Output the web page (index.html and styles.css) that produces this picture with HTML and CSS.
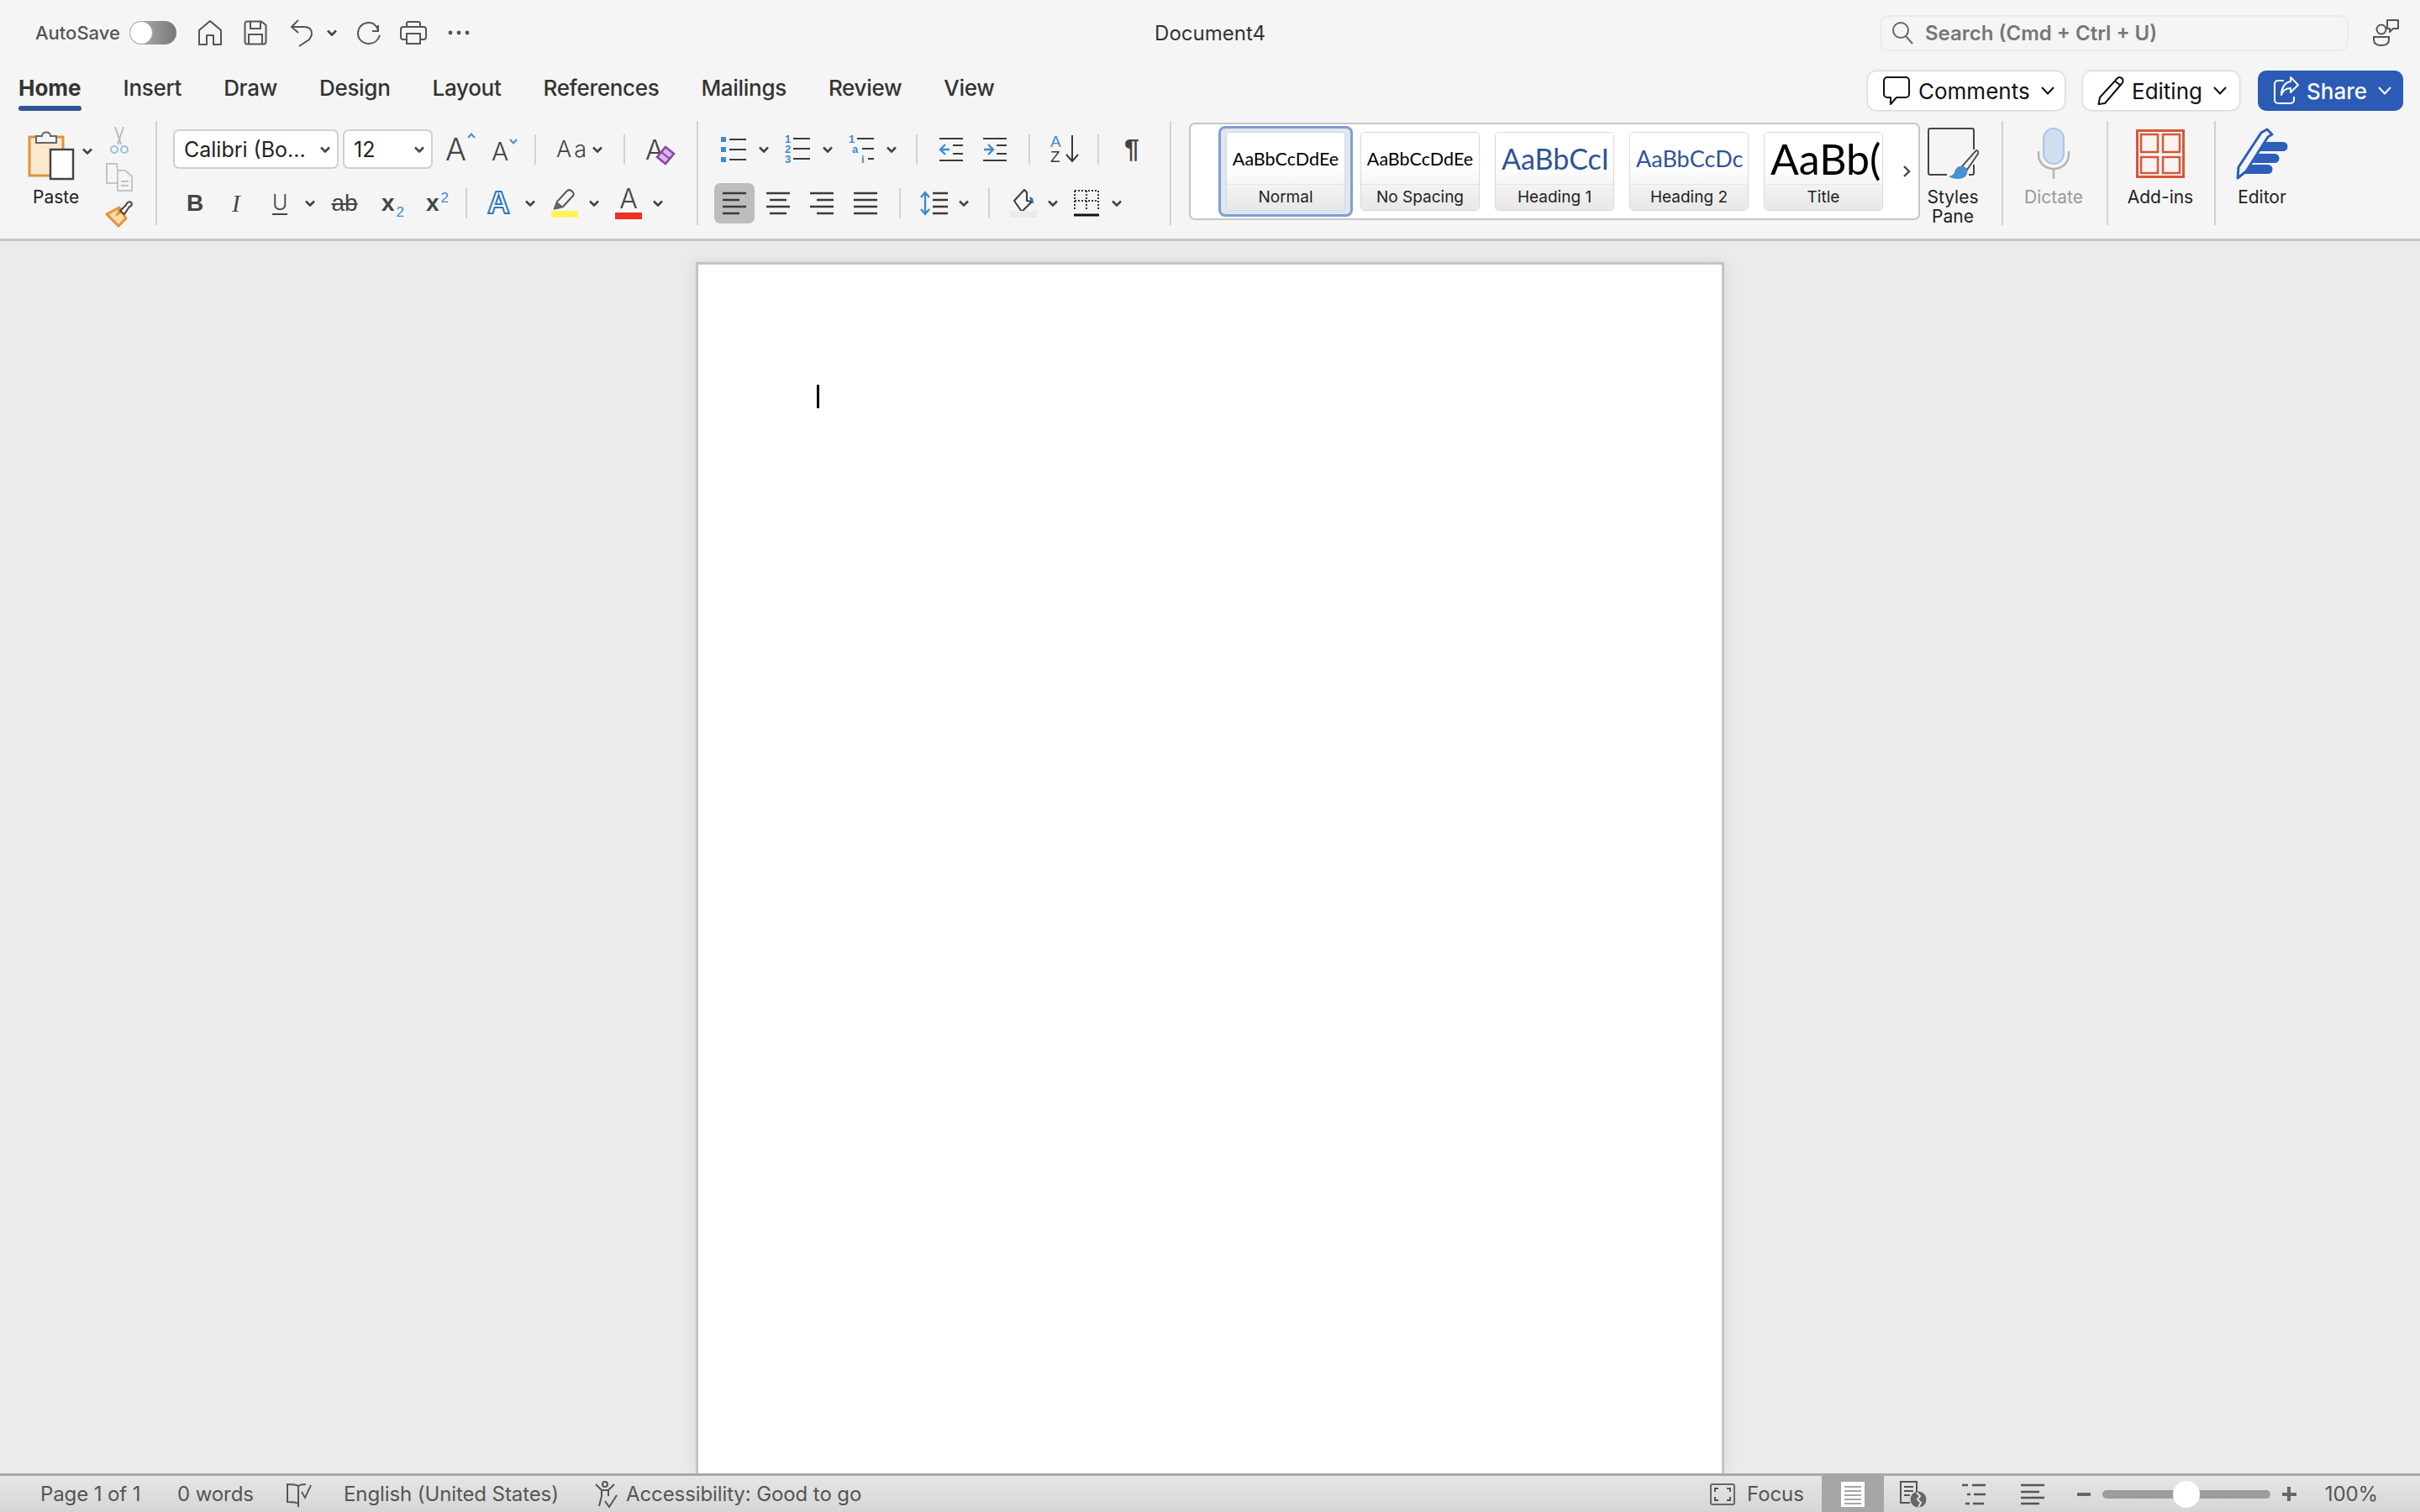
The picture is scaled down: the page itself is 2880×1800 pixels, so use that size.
FILE: index.html
```html
<!DOCTYPE html>
<html>
    <head>
        <meta charset="utf-8">
        <title>Document4</title>
        <link rel="stylesheet" href="styles.css">
    </head>
    <body>
        <svg class="defs" width="0" height="0">
            <symbol id="caret" viewBox="0 0 12 8"><path d="M1 1.500L6 6.500L11 1.500" fill="none" stroke="#444" stroke-width="2.600"/></symbol>
            <symbol id="caret_thin" viewBox="0 0 16 10"><path d="M1 1L8 8.500L15 1" fill="none" stroke="currentColor" stroke-width="2"/></symbol>
        </svg>

        <!-- title bar -->
        <div class="titlebar">
            <div class="qat">
                <span class="autosave">AutoSave</span>
                <span class="toggle"><span class="knob"></span></span>
                <svg width="30" height="32" viewBox="0 0 30 32"><path d="M2 30V13L15 2L28 13V30H19V19H11V30Z" fill="none" stroke="#555" stroke-width="2" stroke-linejoin="round"/></svg>
                <svg width="28" height="30" viewBox="0 0 28 30"><path d="M4 1.500H21L26.500 6V26a2.500 2.500 0 0 1-2.500 2.500H4A2.500 2.500 0 0 1 1.500 26V4A2.500 2.500 0 0 1 4 1.500ZM8 1.500V10H20V1.500M6 28.500V17H22V28.500" fill="none" stroke="#555" stroke-width="2"/></svg>
                <svg width="28" height="34" viewBox="0 0 28 34"><path d="M10 2L2 10L10 17M2 10H17C23 10 26 13 26 18C26 21 25 22 23 25L11 33" fill="none" stroke="#555" stroke-width="2"/></svg>
                <svg class="qat_caret" width="12" height="8"><use href="#caret"/></svg>
                <svg width="30" height="30" viewBox="0 0 30 30"><path d="M26 6V13H19M26 12C24 6 20 3 15 3C8 3 2 8 2 16C2 23 8 28 15 28C21 28 26 24 28 18" fill="none" stroke="#555" stroke-width="2"/></svg>
                <svg width="32" height="30" viewBox="0 0 32 30"><path d="M8 8V4a2 2 0 0 1 2-2H22a2 2 0 0 1 2 2V8M8 23H4a3 3 0 0 1-3-3V11a3 3 0 0 1 3-3H28a3 3 0 0 1 3 3V20a3 3 0 0 1-3 3H24M8 16H24V28H8Z" fill="none" stroke="#555" stroke-width="2"/></svg>
                <svg width="26" height="6" viewBox="0 0 26 6"><circle cx="3" cy="3" r="2.400" fill="#555"/><circle cx="13" cy="3" r="2.400" fill="#555"/><circle cx="23" cy="3" r="2.400" fill="#555"/></svg>
            </div>
            <div class="doc_title">Document4</div>
            <div class="title_right">
                <div class="search">
                    <svg width="26" height="28" viewBox="0 0 26 28"><circle cx="11" cy="11" r="9" fill="none" stroke="#666" stroke-width="2"/><path d="M17 18L25 27" stroke="#666" stroke-width="2"/></svg>
                    <span>Search (Cmd + Ctrl + U)</span>
                </div>
                <svg width="32" height="34" viewBox="0 0 32 34"><circle cx="10" cy="13" r="5.500" fill="none" stroke="#555" stroke-width="2"/><path d="M1 22H19V25C19 30 15 32 10 32C5 32 1 30 1 25Z" fill="none" stroke="#555" stroke-width="2"/><path d="M17 2H30V12H24L20 16V12H17Z" fill="none" stroke="#555" stroke-width="2" stroke-linejoin="round"/></svg>
            </div>
        </div>

        <!-- tabs and the share buttons -->
        <div class="tabrow">
            <div class="tabs">
                <div class="tab active">Home</div>
                <div class="tab">Insert</div>
                <div class="tab">Draw</div>
                <div class="tab">Design</div>
                <div class="tab">Layout</div>
                <div class="tab">References</div>
                <div class="tab">Mailings</div>
                <div class="tab">Review</div>
                <div class="tab">View</div>
            </div>
            <div class="actions">
                <div class="action comments">
                    <svg width="34" height="36" viewBox="0 0 34 36"><path d="M6 2H28a4 4 0 0 1 4 4V22a4 4 0 0 1-4 4H17L10 34V26H6a4 4 0 0 1-4-4V6a4 4 0 0 1 4-4Z" fill="none" stroke="#111" stroke-width="2" stroke-linejoin="round"/></svg>
                    <span>Comments</span>
                    <svg class="a_caret" width="16" height="10"><use href="#caret_thin"/></svg>
                </div>
                <div class="action editing">
                    <svg width="32" height="34" viewBox="0 0 32 34"><path d="M24 2C26 0.500 29 1 30 3C31 5 31 6 29.500 8L9 32L1.500 33L3 25ZM21 5.500L28 11" fill="none" stroke="#111" stroke-width="2" stroke-linejoin="round"/></svg>
                    <span>Editing</span>
                    <svg class="a_caret" width="16" height="10"><use href="#caret_thin"/></svg>
                </div>
                <div class="action share">
                    <svg width="30" height="34" viewBox="0 0 30 34"><path d="M12 5H5a4 4 0 0 0-4 4V28a4 4 0 0 0 4 4H20a4 4 0 0 0 4-4V24M20 1L29 10L20 19V14C15 14 11 16 9 22C9 14 13 7 20 6Z" fill="none" stroke="#fff" stroke-width="2" stroke-linejoin="round"/></svg>
                    <span>Share</span>
                    <svg class="a_caret" width="16" height="10"><use href="#caret_thin"/></svg>
                </div>
            </div>
        </div>

        <!-- ribbon -->
        <div class="ribbon">
            <div class="group clipboard">
                <div class="paste">
                    <svg width="56" height="64" viewBox="0 0 56 64">
                        <rect x="2" y="11" width="40" height="46" fill="#fbe9cf" stroke="#e3913c" stroke-width="3"/>
                        <path d="M10 18V10H17C17 4 27 4 27 10H34V18Z" fill="#f5f5f5" stroke="#666" stroke-width="2"/>
                        <rect x="27" y="26" width="27" height="35" fill="#fff" stroke="#444" stroke-width="2.500"/>
                    </svg>
                    <svg class="paste_caret" width="12" height="8"><use href="#caret"/></svg>
                    <div class="paste_label">Paste</div>
                </div>
                <div class="small_icons">
                    <svg width="32" height="34" viewBox="0 0 32 34"><path d="M11 1L18 22M21 1L14 22" stroke="#bbb" stroke-width="2" fill="none"/><circle cx="10" cy="28" r="4" fill="none" stroke="#9dbfe0" stroke-width="2"/><circle cx="22" cy="28" r="4" fill="none" stroke="#9dbfe0" stroke-width="2"/></svg>
                    <svg width="32" height="34" viewBox="0 0 32 34"><path d="M14 24H1V1H13L14 8M14 9H23L31 16V33H14Z" fill="none" stroke="#c4c4c4" stroke-width="2"/><path d="M18 22H27M18 27H27" stroke="#c4c4c4" stroke-width="2"/></svg>
                    <svg width="32" height="32" viewBox="0 0 32 32"><path d="M1 17L16 9L24 22L15 31Z" fill="#fbd9a8" stroke="#e3913c" stroke-width="3" stroke-linejoin="round"/><path d="M11 20L16 9L22 14Z" fill="#e3913c"/><path d="M17 13L24 6C25 3 28 1 30 3C32 5 30 8 28 8L22 17Z" fill="#f5f5f5" stroke="#444" stroke-width="2" stroke-linejoin="round"/></svg>
                </div>
            </div>
            <div class="big_sep"></div>

            <div class="group font_group">
                <div class="row row_font1">
                    <div class="select font_select"><span>Calibri (Bo...</span><svg width="12" height="8"><use href="#caret"/></svg></div>
                    <div class="select size_select"><span>12</span><svg width="12" height="8"><use href="#caret"/></svg></div>
                    <div class="grow"><span>A</span><svg width="10" height="7" viewBox="0 0 10 7"><path d="M1 6L5 1.500L9 6" fill="none" stroke="#4a90d0" stroke-width="2"/></svg></div>
                    <div class="shrink"><span>A</span><svg width="10" height="7" viewBox="0 0 10 7"><path d="M1 1L5 5.500L9 1" fill="none" stroke="#4a90d0" stroke-width="2"/></svg></div>
                    <div class="sep"></div>
                    <div class="change_case">Aa</div>
                    <svg width="12" height="8"><use href="#caret"/></svg>
                    <div class="sep"></div>
                    <div class="clear_fmt">
                        <span>A</span>
                        <svg width="22" height="22" viewBox="0 0 22 22"><path d="M11 1L21 9L11 21L1 13Z" fill="#d9b8e6" stroke="#8e3ea8" stroke-width="2.500"/><path d="M6 7L16 15" stroke="#8e3ea8" stroke-width="2"/></svg>
                    </div>
                </div>
                <div class="row row_font2">
                    <div class="t_bold">B</div>
                    <div class="t_ital">I</div>
                    <div class="t_under">U</div>
                    <svg width="12" height="8"><use href="#caret"/></svg>
                    <div class="t_strike">ab</div>
                    <div class="t_x">x<sub>2</sub></div>
                    <div class="t_x">x<sup>2</sup></div>
                    <div class="sep"></div>
                    <div class="t_effect">A</div>
                    <svg width="12" height="8"><use href="#caret"/></svg>
                    <svg width="32" height="34" viewBox="0 0 32 34"><path d="M4 23L7 15L19 2C21 0.500 23 1 25 3C27 5 27 7 26 8L14 21L7 23Z" fill="#f5f5f5" stroke="#555" stroke-width="2"/><path d="M3 25L7 15L14 21Z" fill="#666"/><rect y="26" width="32" height="8" fill="#fff35c"/></svg>
                    <svg width="12" height="8"><use href="#caret"/></svg>
                    <div class="t_color"><span>A</span><i></i></div>
                    <svg width="12" height="8"><use href="#caret"/></svg>
                </div>
            </div>
            <div class="big_sep"></div>

            <div class="group para_group">
                <div class="row row_para1">
                    <svg width="30" height="30" viewBox="0 0 30 30"><path d="M0 0H6V6H0ZM0 12H6V18H0ZM0 24H6V30H0Z" fill="#3f8ad0"/><path d="M10 3H30M10 15H30M10 27H30" stroke="#3a3a3a" stroke-width="2.200"/></svg>
                    <svg width="12" height="8"><use href="#caret"/></svg>
                    <svg width="30" height="34" viewBox="0 0 30 34"><text class="svg_num" x="0" y="9">1</text><text class="svg_num" x="0" y="21">2</text><text class="svg_num" x="0" y="33">3</text><path d="M10 4H30M10 16H30M10 28H30" stroke="#3a3a3a" stroke-width="2.200"/></svg>
                    <svg width="12" height="8"><use href="#caret"/></svg>
                    <svg width="30" height="34" viewBox="0 0 30 34"><text class="svg_num" x="0" y="9">1</text><text class="svg_num" x="4" y="21">a</text><text class="svg_num" x="15" y="33">i</text><path d="M10 4H30M16 16H30M23 28H30" stroke="#3a3a3a" stroke-width="2.200"/></svg>
                    <svg width="12" height="8"><use href="#caret"/></svg>
                    <div class="sep"></div>
                    <svg width="28" height="30" viewBox="0 0 28 30"><path d="M0 2H28M16 10H28M16 20H28M0 28H28" stroke="#3a3a3a" stroke-width="2.200"/><path d="M12 15H1M7 9L1 15L7 21" stroke="#3f8ad0" stroke-width="2.400" fill="none"/></svg>
                    <svg width="28" height="30" viewBox="0 0 28 30"><path d="M0 2H28M16 10H28M16 20H28M0 28H28" stroke="#3a3a3a" stroke-width="2.200"/><path d="M1 15H12M6 9L12 15L6 21" stroke="#3f8ad0" stroke-width="2.400" fill="none"/></svg>
                    <div class="sep"></div>
                    <svg width="36" height="36" viewBox="0 0 36 36"><text class="svg_sort az_blue" x="0" y="15">A</text><text class="svg_sort" x="0" y="33">Z</text><path d="M26 1V31M19 24L26 32L33 24" fill="none" stroke="#3a3a3a" stroke-width="2"/></svg>
                    <div class="sep"></div>
                    <div class="pilcrow">¶</div>
                </div>
                <div class="row row_para2">
                    <div class="align_on"><svg width="28" height="28" viewBox="0 0 28 28"><path d="M0 2H28M0 10H20M0 18H28M0 26H20" stroke="#3a3a3a" stroke-width="2.400"/></svg></div>
                    <svg width="28" height="28" viewBox="0 0 28 28"><path d="M0 2H28M4 10H24M0 18H28M4 26H24" stroke="#3a3a3a" stroke-width="2.400"/></svg>
                    <svg width="28" height="28" viewBox="0 0 28 28"><path d="M0 2H28M8 10H28M0 18H28M8 26H28" stroke="#3a3a3a" stroke-width="2.400"/></svg>
                    <svg width="28" height="28" viewBox="0 0 28 28"><path d="M0 2H28M0 10H28M0 18H28M0 26H28" stroke="#3a3a3a" stroke-width="2.400"/></svg>
                    <div class="sep"></div>
                    <svg width="32" height="30" viewBox="0 0 32 30"><path d="M5 2V28M0 8L5 2L10 8M0 22L5 28L10 22" fill="none" stroke="#3f8ad0" stroke-width="2.400"/><path d="M14 3H32M14 11H32M14 19H32M14 27H32" stroke="#3a3a3a" stroke-width="2.400"/></svg>
                    <svg width="12" height="8"><use href="#caret"/></svg>
                    <div class="sep"></div>
                    <svg width="32" height="34" viewBox="0 0 32 34"><path d="M5 14L17 1L20 4V14L26 15L14 27Z" fill="#f5f5f5" stroke="#3a3a3a" stroke-width="2" stroke-linejoin="round"/><path d="M23 10C26 9 28 11 28 18C26 16 25 14 23 10Z" fill="#2f6cb0"/><rect y="26" width="32" height="8" fill="#ebebeb"/></svg>
                    <svg width="12" height="8"><use href="#caret"/></svg>
                    <svg width="30" height="34" viewBox="0 0 30 34"><path d="M1 2H29V26M1 2V26M15 2V26M1 14H29" fill="none" stroke="#333" stroke-width="2" stroke-dasharray="2 2"/><path d="M0 31H30" stroke="#111" stroke-width="3"/></svg>
                    <svg width="12" height="8"><use href="#caret"/></svg>
                </div>
            </div>
            <div class="big_sep"></div>

            <div class="gallery">
                <div class="style_item selected"><div class="style_card"><div class="preview p_normal">AaBbCcDdEe</div><div class="style_name">Normal</div></div></div>
                <div class="style_item"><div class="style_card"><div class="preview p_normal">AaBbCcDdEe</div><div class="style_name">No Spacing</div></div></div>
                <div class="style_item"><div class="style_card"><div class="preview p_h1">AaBbCcI</div><div class="style_name">Heading 1</div></div></div>
                <div class="style_item"><div class="style_card"><div class="preview p_h2">AaBbCcDc</div><div class="style_name">Heading 2</div></div></div>
                <div class="style_item"><div class="style_card"><div class="preview p_title">AaBb(</div><div class="style_name">Title</div></div></div>
                <svg class="gallery_next" width="10" height="16" viewBox="0 0 10 16"><path d="M2 2L8 8L2 14" fill="none" stroke="#444" stroke-width="2.400"/></svg>
            </div>

            <div class="big_btn styles_pane">
                <svg width="62" height="62" viewBox="0 0 62 62"><path d="M24 56H4a2 2 0 0 1-2-2V3a2 2 0 0 1 2-2H54a2 2 0 0 1 2 2V26M56 44V54a2 2 0 0 1-2 2H50" fill="none" stroke="#444" stroke-width="2"/><path d="M58 28C60 26 62 28 61 31L48 50L42 46Z" fill="#f5f5f5" stroke="#555" stroke-width="2"/><path d="M43 46C49 48 50 53 46 58C42 62 32 62 26 58C32 57 33 54 34 50C36 46 40 45 43 46Z" fill="#4a90d0"/></svg>
                <div class="btn_label">Styles<br>Pane</div>
            </div>
            <div class="big_sep"></div>
            <div class="big_btn dictate">
                <svg width="40" height="62" viewBox="0 0 40 62"><rect x="8" y="1" width="24" height="42" rx="12" fill="#cfe0f1" stroke="#a9c6e6" stroke-width="2"/><path d="M2 28V32C2 42 10 49 20 49C30 49 38 42 38 32V28M20 49V61" fill="none" stroke="#b5b5b5" stroke-width="2.500"/></svg>
                <div class="btn_label">Dictate</div>
            </div>
            <div class="big_sep"></div>
            <div class="big_btn addins">
                <svg width="58" height="58" viewBox="0 0 58 58"><path d="M1.500 1.500H56.500V56.500H1.500Z" fill="none" stroke="#d6573a" stroke-width="3"/><path d="M6 6H26V27H6ZM32 6H52V27H32ZM6 33H26V52H6ZM32 33H52V52H32Z" fill="#f8f3f0" stroke="#d6573a" stroke-width="2.500"/></svg>
                <div class="btn_label">Add-ins</div>
            </div>
            <div class="big_sep"></div>
            <div class="big_btn editor">
                <svg width="62" height="62" viewBox="0 0 62 62"><path d="M37 2L43 8L38 11L12 52L2 60L3 47L30 6Z" fill="#f5f5f5" stroke="#2b5fb8" stroke-width="3" stroke-linejoin="round"/><path d="M33 17H56a5 5 0 0 1 0 11H28ZM26 31H46a5 5 0 0 1 0 11H20ZM17 44H38a5 5 0 0 1 0 11H11Z" fill="#2b5fb8"/></svg>
                <div class="btn_label">Editor</div>
            </div>
        </div>

        <!-- document area -->
        <div class="workspace">
            <div class="page"><div class="cursor"></div></div>
        </div>

        <!-- status bar -->
        <div class="statusbar">
            <div class="status_left">
                <span class="s_page">Page 1 of 1</span>
                <span class="s_words">0 words</span>
                <svg class="s_book" width="32" height="30" viewBox="0 0 32 30"><path d="M15 5C12 3 6 3 2 3V24C6 24 12 24 15 26ZM15 5V30M15 5C18 3 22 3 24 3" fill="none" stroke="#555" stroke-width="2"/><path d="M19 12L23 19L30 4" fill="none" stroke="#555" stroke-width="1.800"/></svg>
                <span class="s_lang">English (United States)</span>
                <svg class="s_a11y" width="30" height="32" viewBox="0 0 30 32"><circle cx="13" cy="4" r="3" fill="none" stroke="#555" stroke-width="2"/><path d="M2 4L9 11H17L24 4M9 11V18L6 30M17 11V18" fill="none" stroke="#555" stroke-width="2"/><path d="M13 24L18 31L27 17" fill="none" stroke="#555" stroke-width="2"/></svg>
                <span>Accessibility: Good to go</span>
            </div>
            <div class="status_right">
                <svg width="30" height="26" viewBox="0 0 30 26"><rect x="1" y="1" width="28" height="24" rx="2" fill="none" stroke="#666" stroke-width="2"/><path d="M6 10V6H10M24 10V6H20M6 16V20H10M24 16V20H20" fill="none" stroke="#555" stroke-width="2"/></svg>
                <span class="s_focus">Focus</span>
                <div class="view_on"><svg width="28" height="30" viewBox="0 0 28 30"><rect width="28" height="30" fill="#fff"/><path d="M4 6H24M4 11H24M4 16H24M4 21H24M4 26H24" stroke="#a6a6a6" stroke-width="2"/></svg></div>
                <svg class="s_web" width="32" height="32" viewBox="0 0 32 32"><path d="M12 26H1V1H20V14" fill="none" stroke="#555" stroke-width="2"/><path d="M5 7H16M5 12H16M5 17H12" stroke="#555" stroke-width="2"/><circle cx="22" cy="22" r="9.500" fill="#666"/><path d="M20 14L24 18L21 22L25 26L22 31" stroke="#e4e4e4" stroke-width="2" fill="none"/></svg>
                <svg class="s_outline" width="30" height="26" viewBox="0 0 30 26"><path d="M1 2H8M13 2H29M7 13H11M15 13H29M5 24H10M14 24H27" stroke="#555" stroke-width="2.400"/></svg>
                <svg class="s_draft" width="28" height="26" viewBox="0 0 28 26"><path d="M0 2H28M0 10H22M0 17H28M0 24H22" stroke="#555" stroke-width="2.600"/></svg>
                <span class="zoom_minus"></span>
                <div class="slider"><span class="thumb"></span></div>
                <span class="zoom_plus"></span>
                <span class="s_zoom">100%</span>
            </div>
        </div>
    </body>
</html>
```

FILE: styles.css
```css
*{
    box-sizing: border-box;
}
html, body{
    margin: 0; height: 100%;
}
body{
    width: 2880px; height: 1800px; overflow: hidden; display: flex; flex-direction: column;
    background-color: #ebebeb; color: #333; font-family: Inter, "Noto Sans", sans-serif;
}
svg{
    display: block; flex: none; overflow: visible;
}
.defs{
    position: absolute;
}

/* title bar */
.titlebar{
    height: 78px; display: grid; grid-template-columns: 1fr auto 1fr; align-items: center;
    background-color: #f5f5f5; padding: 0 24px;
}
.qat{
    display: grid; grid-template-columns: 112px 81px 55px 55px 44px 35px 52px 57px 26px; align-items: center; height: 100%; padding-left: 18px;
}
.autosave{
    font-size: 22px; color: #555; font-weight: 500;
}
.toggle{
    display: block; width: 56px; height: 28px; border-radius: 14px; background: linear-gradient(90deg, #bbb, #777);
}
.knob{
    display: block; width: 28px; height: 28px; border-radius: 50%; background-color: #fff; border: 1px solid #aaa;
}
.doc_title{
    font-size: 24px; color: #333;
}
.title_right{
    display: flex; justify-content: flex-end; align-items: center; gap: 29px;
}
.search{
    width: 558px; height: 43px; display: flex; align-items: center; gap: 14px; padding-left: 12px;
    border: 2px solid #ebebeb; border-radius: 10px; font-size: 24px; font-weight: 600; color: #777;
}

/* tabs */
.tabrow{
    height: 56px; display: flex; justify-content: space-between; background-color: #f5f5f5; padding: 0 20px 0 22px;
}
.tabs{
    display: flex; gap: 50px;
}
.tab{
    display: flex; flex-direction: column; height: 54px; padding-top: 6px; font-size: 26px; line-height: 42px; font-weight: 500; color: #333; letter-spacing: -0.3px;
}
.tab::after{
    content: ""; height: 6px; border-radius: 3px;
}
.tab.active{
    font-weight: 700; letter-spacing: 0;
}
.tab.active::after{
    background-color: #2f5597;
}
.actions{
    display: flex; gap: 22px; padding-top: 7px;
}
.action{
    height: 46px; display: flex; align-items: center; gap: 9px; background-color: #fff; color: #111;
    border-radius: 10px; font-size: 26px; box-shadow: 0 0 3px #aaa;
}
.comments{
    width: 234px; padding-left: 17px;
}
.editing{
    width: 186px; padding-left: 17px;
}
.share{
    width: 173px; height: 48px; margin-top: -1px; padding-left: 19px; background-color: #2b5bb5; color: #fff; box-shadow: none; font-weight: 500;
}
.a_caret{
    margin-left: 4px;
}

/* ribbon */
.ribbon{
    height: 153px; display: flex; align-items: flex-start; background-color: #f5f5f5; padding-top: 10px; border-bottom: 3px solid #c8c8c8;
}
.big_sep{
    width: 2px; height: 124px; flex: none; background-color: #d2d2d2;
}
.group{
    flex: none; height: 124px;
}
.clipboard{
    width: 185px; display: flex; align-items: flex-start; padding: 8px 0 0 33px;
}
.paste{
    width: 77px; display: grid; grid-template-columns: 56px 21px; align-items: center; justify-items: center;
}
.paste_caret{
    margin-top: -8px; margin-left: 8px;
}
.paste_label{
    grid-column: 1 / 3; justify-self: start; margin: 7px 0 0 6px; font-size: 21px; line-height: 24px; color: #222;
}
.small_icons{
    margin: -2px 0 0 16px; display: flex; flex-direction: column; gap: 10px;
}
.font_group{
    width: 642px; padding-top: 10px;
}
.para_group{
    width: 561px; padding-top: 10px;
}
.row{
    display: grid; align-items: center; height: 47px;
}
.row + .row{
    margin-top: 17px; height: 48px;
}
.row_font1{
    padding-left: 19px; grid-template-columns: 202px 122px 55px 51px 26px 43px 37px 26px auto;
}
.row_font2{
    padding-left: 35px; grid-template-columns: 53px 49px 39px 31px 60px 53px 47px 26px 45px 31px 45px 31px 45px auto;
}
.row_para1{
    padding-left: 27px; grid-template-columns: 45px 31px 45px 31px 45px 35px 28px 52px 54px 26px 56px 32px auto;
}
.row_para2{
    padding-left: 19px; grid-template-columns: 62px 52px 52px 54px 26px 45px 35px 26px 45px 31px 45px auto;
}
.sep{
    width: 2px; height: 36px; background-color: #d2d2d2;
}
.select{
    height: 47px; display: flex; align-items: center; justify-content: space-between; padding: 0 8px 0 11px;
    background-color: #fff; border: 2px solid #d0d0d0; border-radius: 7px; font-size: 25px; color: #222;
}
.font_select{
    width: 197px;
}
.size_select{
    width: 107px;
}
.grow, .shrink, .clear_fmt{
    display: flex; font-weight: 300; color: #444;
}
.grow{
    font-size: 37px;
}
.shrink{
    font-size: 30px; padding-top: 5px;
}
.grow svg, .shrink svg{
    margin: 3px 0 0 1px;
}
.change_case{
    font-size: 27px; font-weight: 300; color: #444; letter-spacing: 3px;
}
.clear_fmt{
    font-size: 33px;
}
.clear_fmt svg{
    margin: 16px 0 0 -9px;
}
.t_bold, .t_strike, .t_x{
    font-family: "Liberation Sans", sans-serif; color: #444;
}
.t_bold{
    font-size: 28px; font-weight: 700;
}
.t_ital{
    font-family: "Liberation Serif", serif; font-size: 29px; font-style: italic; color: #444; padding-left: 1px;
}
.t_under{
    width: 18px; height: 27px; font-size: 25px; line-height: 24px; font-weight: 300; color: #444; text-align: center; border-bottom: 2px solid #444;
}
.t_strike{
    font-size: 28px; text-decoration: line-through; text-decoration-thickness: 2px; width: 32px; text-align: center;
}
.t_x{
    font-size: 28px; font-weight: 700; line-height: 30px;
}
.t_x sub, .t_x sup{
    font-size: 17px; font-weight: 400; color: #3f8ad0; line-height: 0; margin-left: 2px;
}
.t_effect{
    font-size: 37px; font-weight: 700; line-height: 40px; color: #fff; -webkit-text-stroke: 2px #2e75c6; font-family: "Liberation Sans", sans-serif;
}
.t_color{
    width: 32px; display: flex; flex-direction: column; align-items: center; font-size: 32px; font-weight: 300; line-height: 28px; color: #444;
}
.t_color i{
    display: block; width: 32px; height: 8px; background-color: #ee3124; margin-top: 2px;
}
.svg_num{
    font-family: "Liberation Sans", sans-serif; font-size: 13px; font-weight: 700; fill: #3f8ad0;
}
.svg_sort{
    font-family: "Liberation Sans", sans-serif; font-size: 19px; fill: #3a3a3a;
}
.az_blue{
    fill: #3f8ad0;
}
.pilcrow{
    font-family: "Liberation Sans", sans-serif; font-size: 32px; font-weight: 700; color: #444;
}
.align_on{
    width: 48px; height: 48px; display: flex; align-items: center; justify-content: center; background-color: #bdbdbd; border-radius: 7px;
}

/* style gallery */
.gallery{
    width: 870px; height: 116px; flex: none; display: flex; align-items: center; margin: 2px 0 0 21px; padding: 0 0 0 33px;
    background-color: #fff; border: 2px solid #c6c6c6; border-radius: 7px;
}
.style_item{
    width: 160px; height: 108px; flex: none; padding: 6px 8px; border: 2px solid transparent; border-radius: 8px;
}
.style_item.selected{
    background-color: #dfe6f2; border: 3px solid #7f9fcd; padding: 5px 7px;
}
.style_card{
    height: 92px; display: flex; flex-direction: column; border-radius: 4px; box-shadow: 0 0 0 1px #d8d8d8; overflow: hidden;
}
.preview{
    height: 61px; display: flex; align-items: center; overflow: hidden; padding: 0 7px; white-space: nowrap;
    background: linear-gradient(#fff 60%, #f6f6f6); font-family: Lato, sans-serif; color: #000;
}
.p_normal{
    font-size: 21.5px; justify-content: center;
}
.p_h1{
    font-size: 34px; color: #2f5496;
}
.p_h2{
    font-size: 27px; color: #2f5496;
}
.p_title{
    font-size: 50px;
}
.style_name{
    height: 31px; display: flex; align-items: center; justify-content: center; padding-bottom: 2px; font-size: 19px; color: #222;
    background: linear-gradient(#f3f3f3, #e8e8e8); border-top: 1px solid #e6e6e6;
}
.gallery_next{
    margin-left: 14px;
}

/* big buttons */
.big_btn{
    flex: none; display: flex; flex-direction: column; align-items: center; padding-top: 8px;
}
.big_btn > svg{
    height: 62px; margin-bottom: 9px;
}
.btn_label{
    font-size: 21px; line-height: 23px; text-align: center; color: #222;
}
.styles_pane{
    width: 78px; margin-right: 19px;
}
.dictate{
    width: 123px; padding-right: 3px;
}
.dictate .btn_label{
    color: #999;
}
.addins{
    width: 126px; padding-right: 2px;
}
.editor{
    width: 110px;
}

/* document area */
.workspace{
    flex: 1; display: flex; justify-content: center; padding-top: 25px; overflow: hidden; background-color: #ebebeb;
}
.page{
    width: 1224px; padding: 143px 141px; background-color: #fff; border: 3px solid #c4c4c4; border-bottom: 0; box-shadow: 0 0 16px #d6d6d6;
}
.cursor{
    width: 3px; height: 28px; background-color: #000;
}

/* status bar */
.statusbar{
    height: 46px; flex: none; display: flex; justify-content: space-between; align-items: center; padding: 0 50px 0 48px;
    border-top: 3px solid #a8a8a8; background: linear-gradient(#e6e6e6, #d6d6d6); font-size: 24px; letter-spacing: -0.1px; color: #555;
}
.status_left, .status_right{
    display: flex; align-items: center; height: 100%;
}
.s_page{
    width: 163px;
}
.s_words{
    width: 129px;
}
.s_book{
    margin-right: 37px;
}
.s_lang{
    width: 298px;
}
.s_a11y{
    margin-right: 8px;
}
.s_focus{
    margin: 0 21px 0 14px;
}
.view_on{
    width: 74px; height: 100%; display: flex; align-items: center; justify-content: center; background-color: #a6a6a6;
}
.s_web{
    margin: 0 41px 0 19px;
}
.s_outline{
    margin-right: 41px;
}
.s_draft{
    margin-right: 39px;
}
.zoom_minus{
    width: 16px; height: 4px; background-color: #666;
}
.slider{
    width: 200px; height: 10px; margin: 0 14px; display: flex; align-items: center; padding-left: 84px;
    border-radius: 5px; background-color: #9c9c9c;
}
.thumb{
    width: 32px; height: 32px; flex: none; border-radius: 50%; background-color: #fff;
}
.zoom_plus{
    width: 17px; height: 17px; background: linear-gradient(#666, #666) center / 17px 4px no-repeat, linear-gradient(#666, #666) center / 4px 17px no-repeat;
}
.s_zoom{
    margin-left: 34px;
}
```
